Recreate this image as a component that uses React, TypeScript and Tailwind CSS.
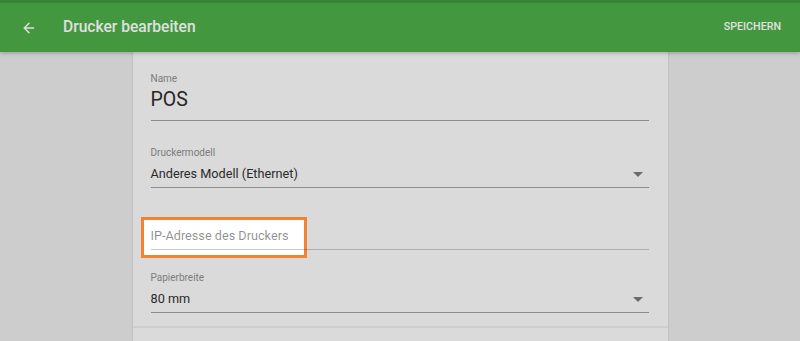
import { ArrowLeft } from 'lucide-react';

function Caret() {
  return (
    <svg width="10" height="5" viewBox="0 0 10 5" className="shrink-0 mr-[6px]">
      <path d="M0 0h10L5 5z" fill="#6b6b6b" />
    </svg>
  );
}

function Label({ children }: { children: React.ReactNode }) {
  return <div className="text-[10px] leading-[12px] text-[#7c7c7c]">{children}</div>;
}

export default function App() {
  return (
    <div className="w-[800px] h-[341px] overflow-hidden bg-[#cdcdcd] font-['Roboto',sans-serif] flex flex-col">
      <header className="relative z-10 h-[52px] shrink-0 bg-[#43983f] border-t-[3px] border-[#3a8436] shadow-[0_2px_3px_rgba(0,0,0,0.18)] flex items-center">
        <ArrowLeft className="ml-[21px] text-[#e0e0e0]" size={16} strokeWidth={2.2} />
        <h1 className="ml-[26px] text-[15.6px] font-medium text-[#e0e0e0]">Drucker bearbeiten</h1>
        <button className="ml-auto mr-[19px] text-[10.7px] font-medium text-[#e0e0e0]">
          SPEICHERN
        </button>
      </header>

      <main className="flex-1 flex justify-center">
        <div className="w-[535px] bg-[#dadada] shadow-[0_0_2px_rgba(0,0,0,0.18)] flex flex-col">
          <div className="pl-[18px] pr-[19px] pt-[21px] flex flex-col">
            {/* Name */}
            <div className="border-b border-[#8c8c8c] pb-[7px]">
              <Label>Name</Label>
              <div className="mt-[2px] text-[19.5px] leading-[26px] text-[#262626]">POS</div>
            </div>

            {/* Druckermodell */}
            <div className="mt-[26px] border-b border-[#8c8c8c] pb-[3px]">
              <Label>Druckermodell</Label>
              <div className="mt-[5px] flex items-center justify-between text-[12.7px] leading-[20px] text-[#2a2a2a]">
                <span>Anderes Modell (Ethernet)</span>
                <Caret />
              </div>
            </div>

            {/* IP-Adresse */}
            <div className="relative mt-[38px]">
              <div className="absolute left-[-10px] top-[-9px] w-[166px] h-[41px] bg-white border-[3px] border-[#f08432]" />
              <div className="relative border-b border-[rgba(0,0,0,0.2)] pb-[3px] text-[12.7px] leading-[20px] text-[rgba(0,0,0,0.45)]">
                IP-Adresse des Druckers
              </div>
            </div>

            {/* Papierbreite */}
            <div className="mt-[22px] border-b border-[#8c8c8c] pb-[3px]">
              <Label>Papierbreite</Label>
              <div className="mt-[5px] flex items-center justify-between text-[12.7px] leading-[20px] text-[#2a2a2a]">
                <span>80 mm</span>
                <Caret />
              </div>
            </div>
          </div>

          <div className="mt-[13px] h-[2px] bg-[#cfcfcf]" />
        </div>
      </main>
    </div>
  );
}
